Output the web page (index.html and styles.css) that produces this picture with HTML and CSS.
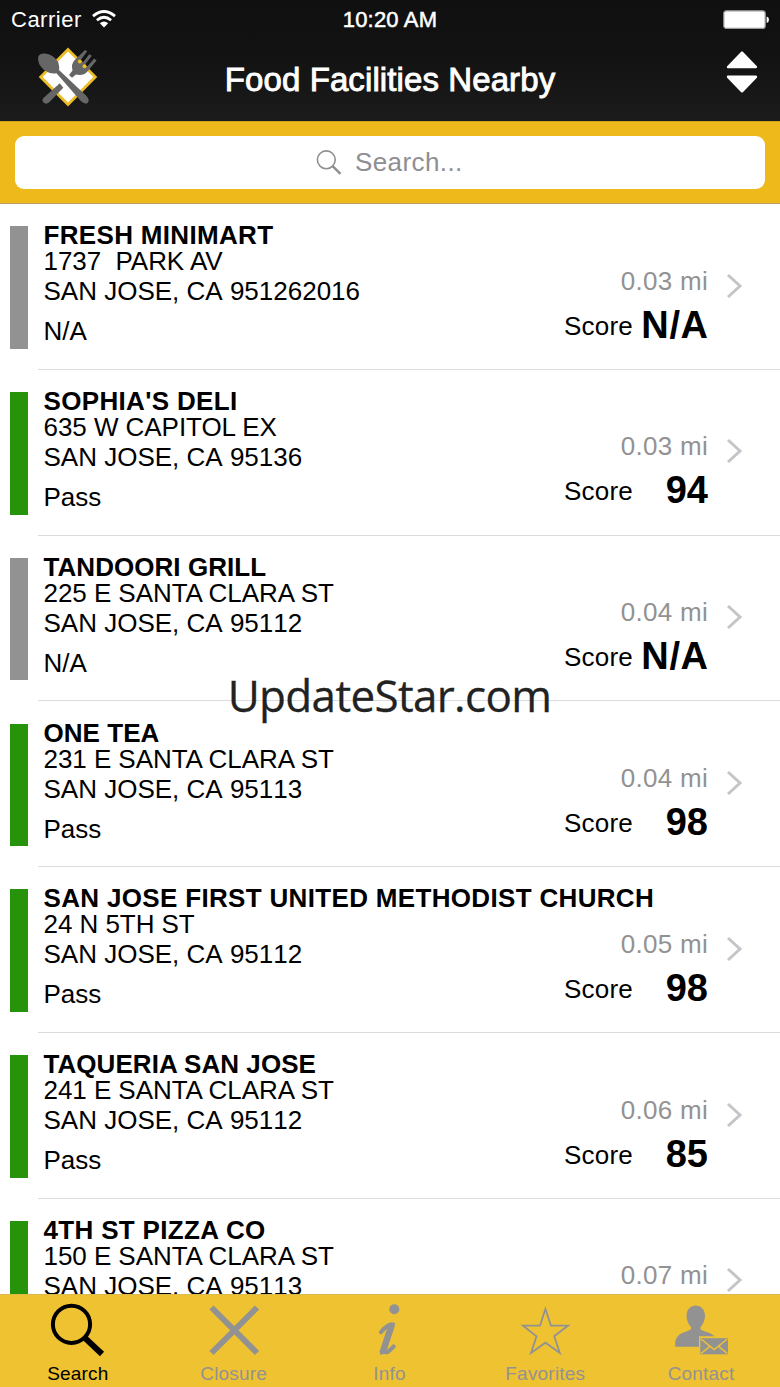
FILE: index.html
```html
<!DOCTYPE html>
<html lang="en">
<head>
<meta charset="utf-8">
<title>Food Facilities Nearby</title>
<link rel="stylesheet" href="styles.css">
</head>
<body>
<div class="screen">
  <header class="header">
    <div class="status-bar">
      <div class="carrier"><span>Carrier</span>
        <svg class="wifi" width="24" height="18" viewBox="0 0 24 18"><g fill="none" stroke="#fff" stroke-width="2.8"><path d="M1 6.1Q12-3.1 23 6.1"/><path d="M4.9 10.2Q12 4.2 19.1 10.2"/></g><path d="M12 17.5L7.8 13.2Q12 9.6 16.2 13.2Z" fill="#fff"/></svg>
      </div>
      <div class="time">10:20 AM</div>
      <div class="battery"><svg width="47" height="20" viewBox="0 0 47 20"><rect x=".8" y=".8" width="41.4" height="17.6" rx="2.5" fill="#fff" stroke="#999" stroke-width="1.2"/><path d="M43.6 6.5Q46 7 46 9.7T43.6 12.9Z" fill="#fff"/></svg></div>
    </div>
    <div class="nav-bar">
      <svg class="logo" width="62" height="62" viewBox="0 0 62 62">
        <path d="M31 3.5L58.3 31 31 58.5 3.7 31Z" fill="#fff" stroke="#edbd25" stroke-width="2.8"/>
        <path d="M22.8 37.2L26.3 41.8 12.5 56Q9 59 6.6 56.6T7 51.5Z" fill="#666"/>
        <path d="M48 4L50.2 5.3 43.8 14Q43.5 17 46 16.2L52.3 8.2 54.8 9.8 48.3 18.3Q48 21.3 50.5 20.3L57.2 12.6 59.6 14.4 50 26Q46.5 30 39 28.5L35 31.8 32 29 35.5 24.5Q33.8 18 37.5 14.2Z" fill="#666"/>
        <circle cx="42.8" cy="15.5" r="2" fill="#edbd25"/><circle cx="47.5" cy="20.3" r="2" fill="#edbd25"/>
        <path d="M1.2 11Q2.2 7 8 7.5Q16 8 21.2 16Q22.7 21 22 24L49 49.5Q53.5 54.5 50.5 57Q47.5 59 42.7 53.8L19.5 27.2Q13.5 28.5 7 24Q0 17.5 1.2 11Z" fill="#666"/>
      </svg>
      <h1 class="title">Food Facilities Nearby</h1>
      <svg class="sort" width="32" height="44" viewBox="0 0 32 44"><g fill="#fff" stroke="#fff" stroke-width="2.4" stroke-linejoin="round"><path d="M16 2.5L30 17H2Z"/><path d="M16 41.3L30 26.8H2Z"/></g></svg>
    </div>
  </header>
  <div class="search-bar">
    <div class="search-field">
      <svg width="27" height="27" viewBox="0 0 27 27" fill="none" stroke="#8e8e93"><circle cx="10.3" cy="10.8" r="8.9" stroke-width="1.6"/><path d="M16.6 17.1L24.5 24.8" stroke-width="2.4"/></svg>
      <span class="placeholder">Search...</span>
    </div>
  </div>
  <main class="list">
    <article class="row"><div class="bar"></div><div class="cell"><div class="details"><div class="name">FRESH MINIMART</div><div class="street">1737  PARK AV</div><div class="city">SAN JOSE, CA 951262016</div><div class="result">N/A</div></div><div class="meta"><div class="distance">0.03 mi</div><div class="score"><span class="label">Score</span><b class="na">N/A</b></div></div><div class="chevron"><svg width="17" height="28" viewBox="0 0 17 28"><path d="M2 3L14 14 2 25"/></svg></div></div></article>
    <article class="row pass"><div class="bar"></div><div class="cell"><div class="details"><div class="name">SOPHIA'S DELI</div><div class="street">635 W CAPITOL EX</div><div class="city">SAN JOSE, CA 95136</div><div class="result">Pass</div></div><div class="meta"><div class="distance">0.03 mi</div><div class="score"><span class="label">Score</span><b>94</b></div></div><div class="chevron"><svg width="17" height="28" viewBox="0 0 17 28"><path d="M2 3L14 14 2 25"/></svg></div></div></article>
    <article class="row"><div class="bar"></div><div class="cell"><div class="details"><div class="name snug">TANDOORI GRILL</div><div class="street">225 E SANTA CLARA ST</div><div class="city">SAN JOSE, CA 95112</div><div class="result">N/A</div></div><div class="meta"><div class="distance">0.04 mi</div><div class="score"><span class="label">Score</span><b class="na">N/A</b></div></div><div class="chevron"><svg width="17" height="28" viewBox="0 0 17 28"><path d="M2 3L14 14 2 25"/></svg></div></div></article>
    <article class="row pass"><div class="bar"></div><div class="cell"><div class="details"><div class="name snug">ONE TEA</div><div class="street">231 E SANTA CLARA ST</div><div class="city">SAN JOSE, CA 95113</div><div class="result">Pass</div></div><div class="meta"><div class="distance">0.04 mi</div><div class="score"><span class="label">Score</span><b>98</b></div></div><div class="chevron"><svg width="17" height="28" viewBox="0 0 17 28"><path d="M2 3L14 14 2 25"/></svg></div></div></article>
    <article class="row pass"><div class="bar"></div><div class="cell"><div class="details"><div class="name">SAN JOSE FIRST UNITED METHODIST CHURCH</div><div class="street">24 N 5TH ST</div><div class="city">SAN JOSE, CA 95112</div><div class="result">Pass</div></div><div class="meta"><div class="distance">0.05 mi</div><div class="score"><span class="label">Score</span><b>98</b></div></div><div class="chevron"><svg width="17" height="28" viewBox="0 0 17 28"><path d="M2 3L14 14 2 25"/></svg></div></div></article>
    <article class="row pass"><div class="bar"></div><div class="cell"><div class="details"><div class="name snug">TAQUERIA SAN JOSE</div><div class="street">241 E SANTA CLARA ST</div><div class="city">SAN JOSE, CA 95112</div><div class="result">Pass</div></div><div class="meta"><div class="distance">0.06 mi</div><div class="score"><span class="label">Score</span><b>85</b></div></div><div class="chevron"><svg width="17" height="28" viewBox="0 0 17 28"><path d="M2 3L14 14 2 25"/></svg></div></div></article>
    <article class="row pass"><div class="bar"></div><div class="cell"><div class="details"><div class="name">4TH ST PIZZA CO</div><div class="street">150 E SANTA CLARA ST</div><div class="city">SAN JOSE, CA 95113</div></div><div class="meta"><div class="distance">0.07 mi</div></div><div class="chevron"><svg width="17" height="28" viewBox="0 0 17 28"><path d="M2 3L14 14 2 25"/></svg></div></div></article>
  </main>
  <nav class="tab-bar">
    <div class="tab active"><svg width="60" height="60" viewBox="0 0 60 60" fill="none" stroke="#000"><circle cx="23.5" cy="24.3" r="18.6" stroke-width="4"/><path d="M36.3 37.4L54 54" stroke-width="6"/></svg><span>Search</span></div>
    <div class="tab"><svg width="60" height="60" viewBox="0 0 60 60" fill="none" stroke="#929292" stroke-width="6"><path d="M7.5 7.5L53 53M53 7.5L7.5 53"/></svg><span>Closure</span></div>
    <div class="tab"><svg width="60" height="60" viewBox="0 0 60 60"><circle cx="35.3" cy="9.3" r="5" fill="#929292"/><path d="M22 32Q28 24.5 33.3 24.3Q34 26 32.3 30L26 48Q24.5 53.3 28.5 52Q32.5 49 34.6 46.5" fill="none" stroke="#929292" stroke-width="4.2" stroke-linecap="round" stroke-linejoin="round"/><path d="M29 25.5L36.3 22.5 27 53 21.5 55 20.6 51.5Z" fill="#929292"/></svg><span>Info</span></div>
    <div class="tab"><svg width="60" height="60" viewBox="0 0 60 60" fill="none" stroke="#929292" stroke-width="1.8"><path d="M30.4 9L36 25.7 53 25.7 39.2 36.2 44.8 53 30.4 42.7 16 53 21.5 36.2 8 25.7 25 25.7Z"/></svg><span>Favorites</span></div>
    <div class="tab"><svg width="60" height="60" viewBox="0 0 60 60"><path d="M15.5 16C15.5 2 34 2 34 16Q33.5 23 29.5 27V29.5Q33 31.2 38 32.7Q41 34 43.5 36.2H28V46.8H4.2V42Q5.5 35.5 11 33Q17.5 31 20 29.3V27Q16 23 15.5 16Z" fill="#929292"/><path d="M29.3 38.2H57V54.3H29.3Z" fill="#929292"/><path d="M30 39L43.2 49.5 56.4 39M30 53.5L39.5 45.8M56.4 53.5L47 45.8" fill="none" stroke="#efc231" stroke-width="1.5"/></svg><span>Contact</span></div>
  </nav>
  <div class="watermark">UpdateStar.com</div>
</div>
</body>
</html>
```
FILE: styles.css
```css
* { box-sizing: border-box; }
body {
  margin: 0;
  font-family: "Liberation Sans", Arial, sans-serif;
  color: #000;
}
svg { display: block; flex: none; }
.screen {
  position: relative;
  display: flex;
  flex-direction: column;
  width: 780px;
  height: 1387px;
  overflow: hidden;
  background: #fff;
}
.header {
  flex: none;
  height: 121px;
  color: #fff;
  background: linear-gradient(#101010, #121212 45%, #1b1b1b);
}
.status-bar {
  display: grid;
  grid-template-columns: 1fr auto 1fr;
  height: 40px;
  padding: 0 11px 0 11px;
  line-height: 40px;
  font-size: 22px;
}
.carrier { display: flex; gap: 10px; letter-spacing: 0.5px; }
.wifi { margin-top: 10px; }
.time { letter-spacing: 0.2px; -webkit-text-stroke: 0.5px #fff; }
.battery { display: flex; justify-content: flex-end; padding-top: 10px; margin-right: -1px; }
.nav-bar {
  display: grid;
  grid-template-columns: 62px 1fr 32px;
  height: 81px;
  padding: 6px 22px 0 37px;
}
.title {
  margin: 0 0 0 -45px;
  text-align: center;
  font-size: 33px;
  font-weight: 400;
  line-height: 68px;
  letter-spacing: 0.1px;
  -webkit-text-stroke: 0.9px #fff;
}
.sort { margin-top: 4px; }
.search-bar {
  flex: none;
  height: 83px;
  padding: 13.7px 15px 0;
  background: #eeba1b;
  border-top: 1px solid #d1a21c;
  border-bottom: 1px solid #b9a15a;
}
.search-field {
  display: flex;
  align-items: center;
  gap: 12px;
  height: 53px;
  padding-left: 301px;
  border-radius: 9px;
  background: #fff;
}
.placeholder { font-size: 26px; letter-spacing: 0.4px; color: #8e8e93; }
.list { flex: 1; min-height: 0; overflow: hidden; }
.row { display: flex; height: 165.8px; }
.bar {
  flex: none;
  width: 18.5px;
  height: 122.5px;
  margin: 22.3px 10px 0 9.5px;
  background: #929292;
}
.pass .bar { background: #27930a; }
.cell {
  flex: 1;
  min-width: 0;
  display: flex;
  padding: 0 37px 0 5.5px;
  border-bottom: 1px solid #dcdcdd;
}
.details {
  flex: 1;
  min-width: 0;
  padding-top: 18.2px;
  font-size: 26px;
  white-space: pre;
}
.name { line-height: 26px; font-weight: 700; letter-spacing: 0.33px; }
.name.snug { letter-spacing: 0.05px; }
.street { line-height: 26px; letter-spacing: -0.05px; }
.city { line-height: 34px; font-kerning: none; }
.result { line-height: 46px; }
.meta { flex: none; width: 144px; padding-top: 61.7px; }
.distance {
  font-size: 26px;
  line-height: 30px;
  letter-spacing: 0.3px;
  text-align: right;
  color: #929292;
}
.score { display: flex; justify-content: space-between; margin-top: 7px; }
.label { font-size: 26px; line-height: 46px; letter-spacing: 0.2px; }
.score b { font-size: 38px; line-height: 44px; }
.score .na { letter-spacing: 0.6px; margin-right: -0.6px; }
.chevron { flex: none; padding: 67.6px 0 0 18px; }
.chevron path { fill: none; stroke: #c5c5c9; stroke-width: 3; }
.tab-bar {
  flex: none;
  display: grid;
  grid-template-columns: repeat(5, 155.8px);
  height: 93px;
  padding-top: 5px;
  background: #efc231;
  border-top: 1px solid #dcb94f;
}
.tab {
  display: flex;
  flex-direction: column;
  align-items: center;
  font-size: 19px;
  line-height: 28px;
  letter-spacing: 0.2px;
  color: #929292;
}
.active { color: #000; }
.watermark {
  position: absolute;
  top: 665px;
  left: 0;
  width: 779px;
  text-align: center;
  font-family: "Open Sans", "Noto Sans", sans-serif;
  font-size: 44px;
  line-height: 60px;
  letter-spacing: -0.65px;
  -webkit-text-stroke: 0.3px #222;
  color: #222;
}
```
